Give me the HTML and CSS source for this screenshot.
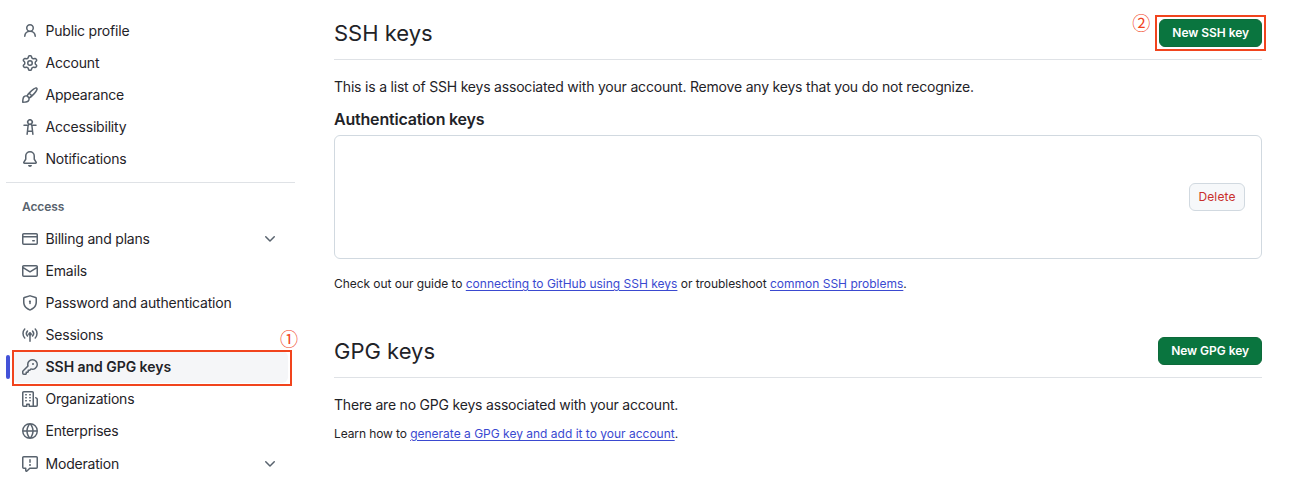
FILE: index.html
```html
<!DOCTYPE html>
<html lang="en">
<head>
<meta charset="utf-8">
<title>SSH and GPG keys</title>
<link rel="stylesheet" href="styles.css">
</head>
<body>
<div class="page">
  <nav class="sidebar">
    <ul class="menu">
      <li class="item"><svg class="icon" viewBox="0 0 16 16"><path d="M10.561 8.073a6.005 6.005 0 0 1 3.432 5.142.75.75 0 1 1-1.498.07 4.5 4.5 0 0 0-8.99 0 .75.75 0 1 1-1.498-.07 6.004 6.004 0 0 1 3.431-5.142 3.999 3.999 0 1 1 5.123 0ZM10.5 5a2.5 2.5 0 1 0-5 0 2.5 2.5 0 0 0 5 0Z"/></svg><span class="label">Public profile</span></li>
      <li class="item"><svg class="icon" viewBox="0 0 16 16"><path d="M8 0a8.2 8.2 0 0 1 .701.031C9.444.095 9.99.645 10.16 1.29l.288 1.107c.018.066.079.158.212.224.231.114.454.243.668.386.123.082.233.09.299.071l1.103-.303c.644-.176 1.392.021 1.82.63.27.385.506.792.704 1.218.315.675.111 1.422-.364 1.891l-.814.806c-.049.048-.098.147-.088.294.016.257.016.515 0 .772-.01.147.038.246.088.294l.814.806c.475.469.679 1.216.364 1.891a7.977 7.977 0 0 1-.704 1.217c-.428.61-1.176.807-1.82.63l-1.102-.302c-.067-.019-.177-.011-.3.071a5.909 5.909 0 0 1-.668.386c-.133.066-.194.158-.211.224l-.29 1.106c-.168.646-.715 1.196-1.458 1.26a8.006 8.006 0 0 1-1.402 0c-.743-.064-1.289-.614-1.458-1.26l-.289-1.106c-.018-.066-.079-.158-.212-.224a5.738 5.738 0 0 1-.668-.386c-.123-.082-.233-.09-.299-.071l-1.103.303c-.644.176-1.392-.021-1.82-.63a8.12 8.12 0 0 1-.704-1.218c-.315-.675-.111-1.422.363-1.891l.815-.806c.05-.048.098-.147.088-.294a6.214 6.214 0 0 1 0-.772c.01-.147-.038-.246-.088-.294l-.815-.806C.635 6.045.431 5.298.746 4.623a7.92 7.92 0 0 1 .704-1.217c.428-.61 1.176-.807 1.82-.63l1.102.302c.067.019.177.011.3-.071.214-.143.437-.272.668-.386.133-.066.194-.158.211-.224l.29-1.106C6.009.645 6.556.095 7.299.03 7.53.01 7.764 0 8 0Zm-.571 1.525c-.036.003-.108.036-.137.146l-.289 1.105c-.147.561-.549.967-.998 1.189-.173.086-.34.183-.5.29-.417.278-.97.423-1.529.27l-1.103-.303c-.109-.03-.175.016-.195.045-.22.312-.412.644-.573.99-.014.031-.021.11.059.19l.815.806c.411.406.562.957.53 1.456a4.709 4.709 0 0 0 0 .582c.032.499-.119 1.05-.53 1.456l-.815.806c-.081.08-.073.159-.059.19.162.346.353.677.573.989.02.03.085.076.195.046l1.102-.303c.56-.153 1.113-.008 1.53.27.161.107.328.204.501.29.447.222.85.629.997 1.189l.289 1.105c.029.109.101.143.137.146a6.6 6.6 0 0 0 1.142 0c.036-.003.108-.036.137-.146l.289-1.105c.147-.561.549-.967.998-1.189.173-.086.34-.183.5-.29.417-.278.97-.423 1.529-.27l1.103.303c.109.029.175-.016.195-.045.22-.313.411-.644.573-.99.014-.031.021-.11-.059-.19l-.815-.806c-.411-.406-.562-.957-.53-1.456a4.709 4.709 0 0 0 0-.582c-.032-.499.119-1.05.53-1.456l.815-.806c.081-.08.073-.159.059-.19a6.464 6.464 0 0 0-.573-.989c-.02-.03-.085-.076-.195-.046l-1.102.303c-.56.153-1.113.008-1.53-.27a4.44 4.44 0 0 0-.501-.29c-.447-.222-.85-.629-.997-1.189l-.289-1.105c-.029-.11-.101-.143-.137-.146a6.6 6.6 0 0 0-1.142 0ZM11 8a3 3 0 1 1-6 0 3 3 0 0 1 6 0ZM9.5 8a1.5 1.5 0 1 0-3.001.001A1.5 1.5 0 0 0 9.5 8Z"/></svg><span class="label">Account</span></li>
      <li class="item"><svg class="icon" viewBox="0 0 16 16"><path d="M11.134 1.535c.7-.509 1.416-.942 2.076-1.155.649-.21 1.463-.267 2.069.34.603.601.568 1.411.368 2.07-.202.668-.624 1.39-1.125 2.096-1.011 1.424-2.496 2.987-3.775 4.249-1.098 1.084-2.132 1.839-3.04 2.3a3.744 3.744 0 0 1-1.055 3.217c-.431.431-1.065.691-1.657.861-.614.177-1.294.287-1.914.357A21.151 21.151 0 0 1 .797 16H.743l.007-.75H.749L.742 16a.75.75 0 0 1-.743-.742l.743-.008-.742.007v-.054a21.25 21.25 0 0 1 .13-2.284c.067-.647.187-1.287.358-1.914.17-.591.43-1.226.86-1.657a3.746 3.746 0 0 1 3.227-1.054c.466-.893 1.225-1.907 2.314-2.982 1.271-1.255 2.833-2.75 4.245-3.777ZM1.62 13.089c-.051.464-.086.929-.104 1.395.466-.018.932-.053 1.396-.104a10.511 10.511 0 0 0 1.668-.309c.526-.151.856-.325 1.011-.48a2.25 2.25 0 1 0-3.182-3.182c-.155.155-.329.485-.48 1.01a10.515 10.515 0 0 0-.309 1.67Zm10.396-10.34c-1.224.89-2.605 2.189-3.822 3.384l1.718 1.718c1.21-1.205 2.51-2.597 3.387-3.833.47-.662.78-1.227.912-1.662.134-.444.032-.551.009-.575h-.001V1.78c-.014-.014-.113-.113-.548.027-.432.14-.995.462-1.655.942Zm-4.832 7.266-.001.001a9.859 9.859 0 0 0 1.63-1.142L7.155 7.216a9.7 9.7 0 0 0-1.161 1.607c.482.302.889.71 1.19 1.192Z"/></svg><span class="label">Appearance</span></li>
      <li class="item"><svg class="icon" viewBox="0 0 16 16"><path d="M9.923 5.302c.063.063.122.129.178.198H14A.75.75 0 0 1 14 7h-3.3l.578 5.163.362 2.997a.75.75 0 0 1-1.49.18L9.868 13H6.132l-.282 2.34a.75.75 0 0 1-1.49-.18l.362-2.997L5.3 7H2a.75.75 0 0 1 0-1.5h3.9a2.54 2.54 0 0 1 .176-.198 3 3 0 1 1 3.847 0ZM9.2 7.073h-.001a1.206 1.206 0 0 0-2.398 0L6.305 11.5h3.39ZM9.5 3a1.5 1.5 0 1 0-3.001.001A1.5 1.5 0 0 0 9.5 3Z"/></svg><span class="label">Accessibility</span></li>
      <li class="item"><svg class="icon" viewBox="0 0 16 16"><path d="M8 16a2 2 0 0 0 1.985-1.75c.017-.137-.097-.25-.235-.25h-3.5c-.138 0-.252.113-.235.25A2 2 0 0 0 8 16ZM3 5a5 5 0 0 1 10 0v2.947c0 .05.015.098.042.139l1.703 2.555A1.519 1.519 0 0 1 13.482 13H2.518a1.516 1.516 0 0 1-1.263-2.36l1.703-2.554A.255.255 0 0 0 3 7.947Zm5-3.5A3.5 3.5 0 0 0 4.5 5v2.947c0 .346-.102.683-.294.97l-1.703 2.556a.017.017 0 0 0-.003.01l.001.006c0 .002.002.004.004.006l.006.004.007.001h10.964l.007-.001.006-.004.004-.006.001-.007a.017.017 0 0 0-.003-.01l-1.703-2.554a1.745 1.745 0 0 1-.294-.97V5A3.5 3.5 0 0 0 8 1.5Z"/></svg><span class="label">Notifications</span></li>
    </ul>
    <hr class="side-rule">
    <h2 class="side-heading">Access</h2>
    <ul class="menu">
      <li class="item"><svg class="icon" viewBox="0 0 16 16"><path d="M10.75 9a.75.75 0 0 0 0 1.5h1.5a.75.75 0 0 0 0-1.5h-1.5Z"/><path d="M0 3.75C0 2.784.784 2 1.75 2h12.5c.966 0 1.75.784 1.75 1.75v8.5A1.75 1.75 0 0 1 14.25 14H1.75A1.75 1.75 0 0 1 0 12.25ZM14.5 6.5h-13v5.75c0 .138.112.25.25.25h12.5a.25.25 0 0 0 .25-.25Zm0-2.75a.25.25 0 0 0-.25-.25H1.75a.25.25 0 0 0-.25.25V5h13Z"/></svg><span class="label">Billing and plans</span><svg class="chevron" viewBox="0 0 16 16"><path d="M12.78 5.22a.749.749 0 0 1 0 1.06l-4.25 4.25a.749.749 0 0 1-1.06 0L3.22 6.28a.749.749 0 1 1 1.06-1.06L8 8.939l3.72-3.719a.749.749 0 0 1 1.06 0Z"/></svg></li>
      <li class="item"><svg class="icon" viewBox="0 0 16 16"><path d="M1.75 2h12.5c.966 0 1.75.784 1.75 1.75v8.5A1.75 1.75 0 0 1 14.25 14H1.75A1.75 1.75 0 0 1 0 12.25v-8.5C0 2.784.784 2 1.75 2ZM1.5 12.251c0 .138.112.25.25.25h12.5a.25.25 0 0 0 .25-.25V5.809L8.38 9.397a.75.75 0 0 1-.76 0L1.5 5.809v6.442Zm13-8.181v-.32a.25.25 0 0 0-.25-.25H1.75a.25.25 0 0 0-.25.25v.32L8 7.88Z"/></svg><span class="label">Emails</span></li>
      <li class="item"><svg class="icon" viewBox="0 0 16 16"><path d="M7.467.133a1.748 1.748 0 0 1 1.066 0l5.25 1.68A1.75 1.75 0 0 1 15 3.48V7c0 1.566-.32 3.182-1.303 4.682-.983 1.498-2.585 2.813-5.032 3.855a1.697 1.697 0 0 1-1.33 0c-2.447-1.042-4.049-2.357-5.032-3.855C1.32 10.182 1 8.566 1 7V3.48a1.75 1.75 0 0 1 1.217-1.667Zm.61 1.429a.25.25 0 0 0-.153 0l-5.25 1.68a.25.25 0 0 0-.174.238V7c0 1.358.275 2.666 1.057 3.86.784 1.194 2.121 2.34 4.366 3.297a.196.196 0 0 0 .154 0c2.245-.956 3.582-2.104 4.366-3.298C13.225 9.666 13.5 8.36 13.5 7V3.48a.251.251 0 0 0-.174-.237l-5.25-1.68ZM9 6.5a1 1 0 0 1-.25.661V8.5a.75.75 0 0 1-1.5 0V7.161A1 1 0 1 1 9 6.5Z"/></svg><span class="label">Password and authentication</span></li>
      <li class="item"><svg class="icon" viewBox="0 0 16 16"><path d="M8.75 8.582v5.668a.75.75 0 0 1-1.5 0V8.582a1.75 1.75 0 1 1 1.5 0Zm3.983-7.125a.75.75 0 0 1 1.06.026A7.25 7.25 0 0 1 15.75 6.5a7.25 7.25 0 0 1-1.957 4.965.75.75 0 0 1-1.086-1.035A5.75 5.75 0 0 0 14.25 6.5a5.75 5.75 0 0 0-1.543-3.93.75.75 0 0 1 .026-1.113Zm-9.466 0c.3.286.312.76.026 1.06A5.75 5.75 0 0 0 1.75 6.5a5.75 5.75 0 0 0 1.543 3.93.75.75 0 0 1-1.086 1.035A7.25 7.25 0 0 1 .25 6.5a7.25 7.25 0 0 1 1.957-4.965.75.75 0 0 1 1.06-.026ZM10.03 3.54a.75.75 0 0 1 1.06.04 4.25 4.25 0 0 1 0 5.84.75.75 0 0 1-1.1-1.02 2.75 2.75 0 0 0 0-3.8.75.75 0 0 1 .04-1.06Zm-4.06 0a.75.75 0 0 1 .04 1.06 2.75 2.75 0 0 0 0 3.8.75.75 0 0 1-1.1 1.02 4.25 4.25 0 0 1 0-5.84.75.75 0 0 1 1.06-.04Z"/></svg><span class="label">Sessions</span></li>
      <li class="item item-active"><svg class="icon" viewBox="0 0 16 16"><path d="M10.5 0a5.499 5.499 0 1 1-1.288 10.848l-.932.932a.749.749 0 0 1-.53.22H7v.75a.749.749 0 0 1-.22.53l-.5.5a.749.749 0 0 1-.53.22H5v.75a.749.749 0 0 1-.22.53l-.5.5a.749.749 0 0 1-.53.22h-2A1.75 1.75 0 0 1 0 14.25v-2c0-.199.079-.389.22-.53l4.932-4.932A5.5 5.5 0 0 1 10.5 0Zm-4 5.5c-.001.431.069.86.205 1.269a.75.75 0 0 1-.181.768L1.5 12.56v1.69c0 .138.112.25.25.25h1.69l.06-.06v-1.19a.75.75 0 0 1 .75-.75h1.19l.06-.06v-1.19a.75.75 0 0 1 .75-.75h1.19l1.023-1.025a.75.75 0 0 1 .768-.18A4 4 0 1 0 6.5 5.5ZM11 6a1 1 0 1 1 0-2 1 1 0 0 1 0 2Z"/></svg><span class="label">SSH and GPG keys</span><span class="callout-box callout-side"></span><span class="callout-num callout-num-side">①</span></li>
      <li class="item"><svg class="icon" viewBox="0 0 16 16"><path d="M1.75 16A1.75 1.75 0 0 1 0 14.25V1.75C0 .784.784 0 1.75 0h8.5C11.216 0 12 .784 12 1.75v12.5c0 .085-.006.168-.018.25h2.268a.25.25 0 0 0 .25-.25V8.285a.25.25 0 0 0-.111-.208l-1.055-.703a.749.749 0 1 1 .832-1.248l1.055.703c.487.325.779.871.779 1.456v5.965A1.75 1.75 0 0 1 14.25 16h-3.5a.766.766 0 0 1-.197-.026c-.099.017-.2.026-.303.026h-3a.75.75 0 0 1-.75-.75V14h-1v1.25a.75.75 0 0 1-.75.75Zm-.25-1.75c0 .138.112.25.25.25H4v-1.25a.75.75 0 0 1 .75-.75h2.5a.75.75 0 0 1 .75.75v1.25h2.25a.25.25 0 0 0 .25-.25V1.75a.25.25 0 0 0-.25-.25h-8.5a.25.25 0 0 0-.25.25ZM3.75 6h.5a.75.75 0 0 1 0 1.5h-.5a.75.75 0 0 1 0-1.5ZM3 3.75A.75.75 0 0 1 3.75 3h.5a.75.75 0 0 1 0 1.5h-.5A.75.75 0 0 1 3 3.75Zm4 3A.75.75 0 0 1 7.75 6h.5a.75.75 0 0 1 0 1.5h-.5A.75.75 0 0 1 7 6.75ZM7.75 3h.5a.75.75 0 0 1 0 1.5h-.5a.75.75 0 0 1 0-1.5ZM3 9.75A.75.75 0 0 1 3.75 9h.5a.75.75 0 0 1 0 1.5h-.5A.75.75 0 0 1 3 9.75ZM7.75 9h.5a.75.75 0 0 1 0 1.5h-.5a.75.75 0 0 1 0-1.5Z"/></svg><span class="label">Organizations</span></li>
      <li class="item"><svg class="icon" viewBox="0 0 16 16"><path d="M8 0a8 8 0 1 1 0 16A8 8 0 0 1 8 0ZM5.78 8.75a9.64 9.64 0 0 0 1.363 4.177c.255.426.542.832.857 1.215.245-.296.551-.705.857-1.215A9.64 9.64 0 0 0 10.22 8.75Zm4.44-1.5a9.64 9.64 0 0 0-1.363-4.177c-.307-.51-.612-.919-.857-1.215a9.927 9.927 0 0 0-.857 1.215A9.64 9.64 0 0 0 5.78 7.25Zm-5.944 1.5H1.543a6.507 6.507 0 0 0 4.666 5.5c-.123-.181-.24-.365-.352-.552-.715-1.192-1.437-2.874-1.581-4.948Zm-2.733-1.5h2.733c.144-2.074.866-3.756 1.58-4.948.12-.197.237-.381.353-.552a6.507 6.507 0 0 0-4.666 5.5Zm10.181 1.5c-.144 2.074-.866 3.756-1.58 4.948-.12.197-.237.381-.353.552a6.507 6.507 0 0 0 4.666-5.5Zm2.733-1.5a6.507 6.507 0 0 0-4.666-5.5c.123.181.24.365.353.552.714 1.192 1.436 2.874 1.58 4.948Z"/></svg><span class="label">Enterprises</span></li>
      <li class="item item-last"><svg class="icon" viewBox="0 0 16 16"><path d="M0 1.75C0 .784.784 0 1.75 0h12.5C15.216 0 16 .784 16 1.75v9.5A1.75 1.75 0 0 1 14.25 13H8.06l-2.573 2.573A1.458 1.458 0 0 1 3 14.543V13H1.75A1.75 1.75 0 0 1 0 11.25Zm1.75-.25a.25.25 0 0 0-.25.25v9.5c0 .138.112.25.25.25h2a.75.75 0 0 1 .75.75v2.19l2.72-2.72a.749.749 0 0 1 .53-.22h6.5a.25.25 0 0 0 .25-.25v-9.5a.25.25 0 0 0-.25-.25Zm7 2.25v2.5a.75.75 0 0 1-1.5 0v-2.5a.75.75 0 0 1 1.5 0ZM9 9a1 1 0 1 1-2 0 1 1 0 0 1 2 0Z"/></svg><span class="label">Moderation</span><svg class="chevron" viewBox="0 0 16 16"><path d="M12.78 5.22a.749.749 0 0 1 0 1.06l-4.25 4.25a.749.749 0 0 1-1.06 0L3.22 6.28a.749.749 0 1 1 1.06-1.06L8 8.939l3.72-3.719a.749.749 0 0 1 1.06 0Z"/></svg></li>
    </ul>
  </nav>
  <main class="content">
    <section class="section-ssh">
      <header class="section-head">
        <h1 class="section-title">SSH keys</h1>
        <span class="button-wrap">
          <span class="callout-num callout-num-top">②</span>
          <span class="callout-box callout-top"></span>
          <button class="btn-primary" type="button"><span class="btn-text">New SSH key</span></button>
        </span>
      </header>
      <p class="lead">This is a list of SSH keys associated with your account. Remove any keys that you do not recognize.</p>
      <h2 class="sub-title">Authentication keys</h2>
      <div class="key-box"><button class="btn-delete" type="button"><span class="btn-text">Delete</span></button></div>
      <p class="note">Check out our guide to <a href="#">connecting to GitHub using SSH keys</a> or troubleshoot <a href="#">common SSH problems</a>.</p>
    </section>
    <section class="section-gpg">
      <header class="section-head">
        <h1 class="section-title">GPG keys</h1>
        <button class="btn-primary" type="button"><span class="btn-text">New GPG key</span></button>
      </header>
      <p class="lead">There are no GPG keys associated with your account.</p>
      <p class="note note-gpg">Learn how to <a href="#">generate a GPG key and add it to your account</a>.</p>
    </section>
  </main>
</div>
</body>
</html>
```
FILE: styles.css
```css
* { box-sizing: border-box; }
html, body { margin: 0; padding: 0; height: 100%; overflow: hidden; background: #fff; }
body { font-family: Inter, "Liberation Sans", sans-serif; color: #1f2328; font-size: 14px; }
.page { display: flex; align-items: flex-start; padding-top: 15px; padding-left: 6px; }

.sidebar { width: 289px; flex: none; isolation: isolate; }
.menu { list-style: none; margin: 0; padding: 0; }
.item { position: relative; display: flex; align-items: center; height: 32px; padding: 0 16px; font-size: 14px; letter-spacing: -0.2px; white-space: nowrap; }
.item-last { margin-top: 1px; }
.label { padding-bottom: 2px; }
.icon { width: 16px; height: 16px; fill: #59636e; flex: none; margin-right: 7.5px; }
.chevron { width: 16px; height: 16px; fill: #59636e; margin-left: auto; margin-right: 1px; }
.item-active { font-weight: 600; letter-spacing: -0.04px; }
.item-active::after { content: ""; position: absolute; z-index: -1; left: 7px; right: 7px; top: 0; height: 32px; border-radius: 6px; background: #f5f6f8; }
.item-active::before { content: ""; position: absolute; left: 0; top: 4px; width: 4px; height: 24px; border-radius: 6px; background: #4352d8; }
.side-rule { border: 0; height: 1px; background: #dfe2e6; margin: 7px 0 0; }
.side-heading { margin: 0; height: 40px; padding: 16px 16px 0; font-size: 12px; line-height: 16px; font-weight: 600; color: #59636e; letter-spacing: -0.1px; }

.content { width: 928px; margin-left: 39px; }
.section-head { display: flex; align-items: flex-start; justify-content: space-between; height: 45px; padding-top: 4px; border-bottom: 1px solid #dfe2e6; }
.section-title { margin: 0; font-size: 22px; line-height: 28px; font-weight: 400; }
.button-wrap { position: relative; display: flex; }
.btn-text { display: block; padding-bottom: 1px; }
.btn-primary { height: 28px; padding: 0 12px; border: 1px solid #0d6a3a; border-radius: 6px; background: #0a753f; color: #fff; font: 600 12px Inter, "Liberation Sans", sans-serif; letter-spacing: -0.05px; }
.lead { margin: 17px 0 0; font-size: 14px; line-height: 20px; letter-spacing: -0.2px; }
.sub-title { margin: 10px 0 0; font-size: 16px; line-height: 24px; font-weight: 600; letter-spacing: -0.2px; }
.key-box { display: flex; align-items: center; justify-content: flex-end; height: 124px; margin-top: 4px; padding: 0 16px; border: 1px solid #d1d9e0; border-radius: 6px; }
.btn-delete { height: 28px; width: 56px; padding: 0; border: 1px solid #d1d9e0; border-radius: 6px; background: #f6f8fa; color: #c9302c; font: 400 12px Inter, "Liberation Sans", sans-serif; letter-spacing: 0.1px; }
.note { margin: 16px 0 0; font-size: 12px; line-height: 18px; letter-spacing: -0.05px; }
.note a { color: #3a49d0; letter-spacing: 0; text-decoration: underline; text-underline-offset: 2px; }
.section-gpg { margin-top: 40px; }
.note-gpg { margin-top: 10px; letter-spacing: -0.1px; }

.callout-box { position: absolute; border: 2px solid #f1441d; pointer-events: none; }
.callout-side { left: 6px; top: -1px; width: 280px; height: 36px; }
.callout-top { left: -4px; top: -4px; width: 111px; height: 36px; }
.callout-num { position: absolute; color: #f1441d; font-family: "Noto Sans CJK SC", sans-serif; font-size: 18px; line-height: 20px; font-weight: 400; }
.callout-num-side { left: 274px; top: -23px; }
.callout-num-top { left: -27px; top: -7px; }
```
